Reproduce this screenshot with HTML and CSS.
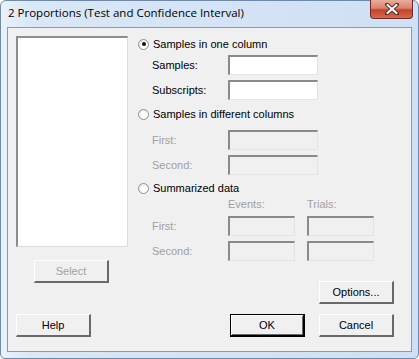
FILE: index.html
```html
<!DOCTYPE html>
<html>
<head>
    <title>2 Proportions (Test and Confidence Interval)</title>
    <link rel="stylesheet" href="styles.css">
</head>
<body>
    <div class="window">
        <div class="titlebar">
            <span class="title">2 Proportions (Test and Confidence Interval)</span>
            <div class="close">
                <svg width="16" height="12" viewBox="0 0 16 12">
                    <path d="M3 1.5 L13 10.5 M13 1.5 L3 10.5" stroke="#5a2a22" stroke-width="4" stroke-linecap="round"/>
                    <path d="M3.5 2 L12.5 10 M12.5 2 L3.5 10" stroke="#fff" stroke-width="2.2" stroke-linecap="round"/>
                </svg>
            </div>
        </div>
        <div class="client">
            <div class="top">
                <div class="left">
                    <div class="listbox"></div>
                    <button class="btn select" disabled>Select</button>
                </div>
                <div class="right">
                    <label class="radio-row r1"><span class="radio checked"></span>Samples in one column</label>
                    <div class="field f1"><span class="lbl">Samples:</span><span class="input"></span></div>
                    <div class="field"><span class="lbl">Subscripts:</span><span class="input"></span></div>

                    <label class="radio-row r2"><span class="radio"></span>Samples in different columns</label>
                    <div class="field f2 off"><span class="lbl">First:</span><span class="input"></span></div>
                    <div class="field off"><span class="lbl">Second:</span><span class="input"></span></div>

                    <label class="radio-row r3"><span class="radio"></span>Summarized data</label>
                    <div class="heads off"><span class="h">Events:</span><span class="h">Trials:</span></div>
                    <div class="field f3 off"><span class="lbl">First:</span><span class="input small"></span><span class="input small"></span></div>
                    <div class="field off"><span class="lbl">Second:</span><span class="input small"></span><span class="input small"></span></div>

                    <div class="options-row">
                        <button class="btn">Options...</button>
                    </div>
                </div>
            </div>
            <div class="bottom">
                <button class="btn">Help</button>
                <div class="spacer"></div>
                <button class="btn default">OK</button>
                <button class="btn">Cancel</button>
            </div>
        </div>
    </div>
</body>
</html>
```

FILE: styles.css
```css
html, body {
    margin: 0;
    padding: 0;
    background: #ffffff;
}
body {
    font-family: "Liberation Sans", Arial, sans-serif;
    font-size: 11px;
    color: #000;
}
.window {
    width: 419px;
    height: 359px;
    box-sizing: border-box;
    padding: 0 6px 6px 6px;
    background: linear-gradient(to right, #eaf2fb 0px, #d9e7f6 30px, #cfe0f4 100%);
    border: 1px solid #6f8aa8;
    border-radius: 6px 6px 5px 5px;
    display: flex;
    flex-direction: column;
}
.titlebar {
    height: 26px;
    flex-shrink: 0;
    display: flex;
    align-items: flex-start;
    justify-content: space-between;
}
.title {
    font-family: "Open Sans", "Liberation Sans", sans-serif;
    font-size: 11.5px;
    margin-top: 4px;
    margin-left: 1px;
    color: #000;
}
.close {
    width: 43px;
    height: 19px;
    margin-right: -1px;
    margin-top: -1px;
    border: 1px solid #6d2b24;
    border-top: none;
    border-radius: 0 0 4px 4px;
    background: linear-gradient(to bottom, #e9ad9c 0%, #d98371 45%, #c4432b 55%, #d46a4c 100%);
    display: flex;
    align-items: center;
    justify-content: center;
    box-sizing: border-box;
}
.client {
    flex: 1;
    min-height: 0;
    background: #f0f0f0;
    border: 1px solid #8a9bb0;
    padding: 8px 17px 0 8px;
    display: flex;
    flex-direction: column;
}
.top {
    display: flex;
}
.left {
    width: 112px;
    display: flex;
    flex-direction: column;
}
.listbox {
    height: 211px;
    background: #fff;
    border-top: 2px solid #8d8d8d;
    border-left: 2px solid #8d8d8d;
    border-right: 1px solid #dcdcdc;
    border-bottom: 1px solid #dcdcdc;
    box-sizing: border-box;
}
.btn {
    width: 75px;
    height: 23px;
    font-family: "Liberation Sans", Arial, sans-serif;
    font-size: 11px;
    color: #000;
    background: #f0f0f0;
    border-top: 1px solid #fff;
    border-left: 1px solid #fff;
    border-right: 2px solid #696969;
    border-bottom: 2px solid #696969;
    box-sizing: border-box;
    padding: 0;
}
.btn:disabled {
    color: #a0a0a0;
}
.btn.default {
    border: 1px solid #000;
    border-right: 2px solid #000;
    border-bottom: 2px solid #000;
    box-shadow: inset 1px 1px 0 #fff, inset -1px -1px 0 #696969;
}
.select {
    margin: 13px 0 0 18px;
}
.right {
    margin-left: 10px;
    flex: 1;
}
.radio-row {
    display: flex;
    align-items: center;
    height: 14px;
}
.r1 { margin-top: 1px; }
.r2 { margin-top: 7px; }
.r3 { margin-top: 6px; }
.radio {
    width: 11px;
    height: 11px;
    border-radius: 50%;
    box-sizing: border-box;
    border: 1px solid #8e8f8f;
    background: radial-gradient(circle at 60% 60%, #fff 40%, #e0e0e0 100%);
    margin-right: 4px;
    position: relative;
}
.radio.checked::after {
    content: "";
    position: absolute;
    left: 2.5px;
    top: 2.5px;
    width: 4px;
    height: 4px;
    border-radius: 50%;
    background: #111;
}
.field {
    display: flex;
    align-items: center;
    height: 20px;
    margin-top: 5px;
    padding-left: 14px;
}
.f1 { margin-top: 4px; }
.f2 { margin-top: 9px; }
.f3 { margin-top: 5px; }
.lbl {
    width: 76px;
}
.input {
    width: 90px;
    height: 20px;
    background: #fff;
    border-top: 2px solid #8a8a8a;
    border-left: 2px solid #8a8a8a;
    border-right: 1px solid #e3e3e3;
    border-bottom: 1px solid #e3e3e3;
    box-sizing: border-box;
}
.input.small {
    width: 67px;
    margin-right: 12px;
}
.off {
    color: #a0a0a0;
}
.off .input {
    background: #f0f0f0;
}
.heads {
    display: flex;
    padding-left: 90px;
    height: 13px;
    margin-top: 3px;
}
.h {
    width: 79px;
}
.options-row {
    display: flex;
    justify-content: flex-end;
    margin-top: 20px;
}
.bottom {
    display: flex;
    margin-top: 10px;
}
.spacer {
    flex: 1;
}
.bottom .default {
    margin-right: 14px;
}
```
